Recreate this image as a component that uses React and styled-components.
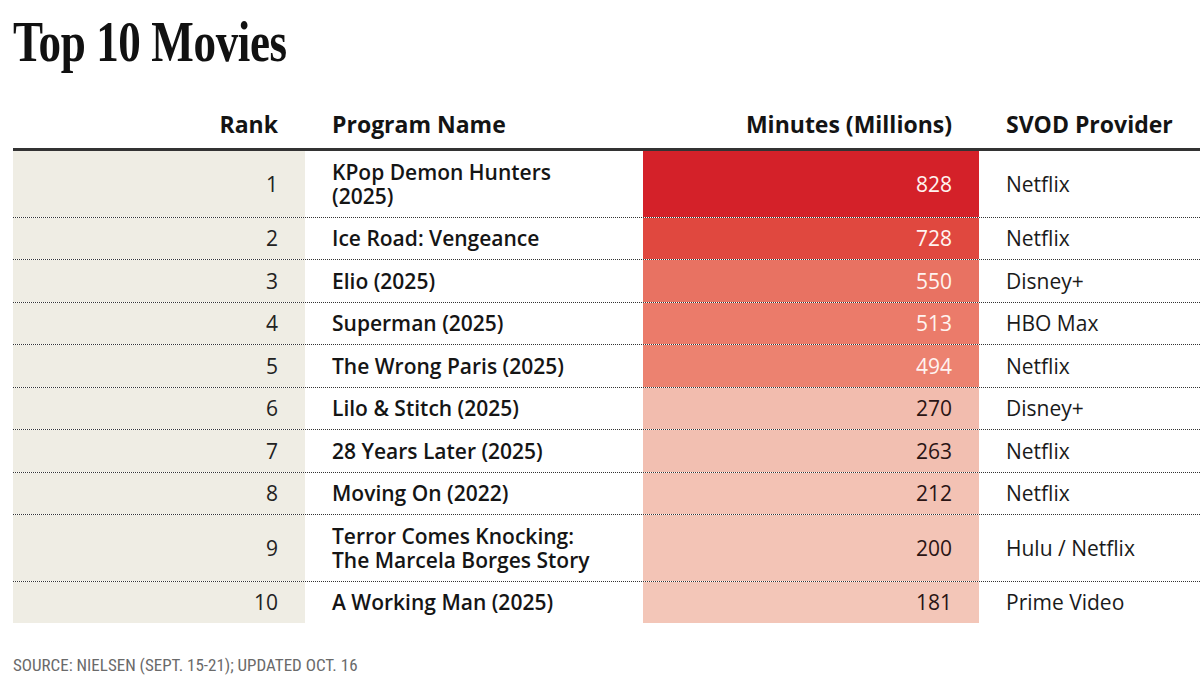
import React from "react";
import styled, { createGlobalStyle } from "styled-components";

const GlobalStyle = createGlobalStyle`
  html, body {
    margin: 0;
    padding: 0;
    background: #ffffff;
  }
  body {
    font-family: "Open Sans", "Liberation Sans", sans-serif;
    color: #1c1c1c;
  }
`;

const Page = styled.div`
  width: 1200px;
  height: 682px;
  overflow: hidden;
  padding: 0 0 0 13px;
  box-sizing: border-box;
  display: flex;
  flex-direction: column;
`;

const Title = styled.h1`
  margin: 14px 0 0;
  font-family: "Liberation Serif", "Times New Roman", serif;
  font-weight: 700;
  font-size: 56px;
  line-height: 56px;
  letter-spacing: -0.5px;
  color: #111;
  > span {
    display: inline-block;
    transform: scaleX(0.805);
    transform-origin: left center;
  }
`;

const COLUMNS = "292px 338px 336px 221px";

const HeaderRow = styled.div`
  display: grid;
  grid-template-columns: ${COLUMNS};
  margin-top: 41px;
  padding-bottom: 10px;
  border-bottom: 3px solid #333;
`;

const HeaderCell = styled.div`
  font-size: 23px;
  line-height: 27px;
  font-weight: 700;
  color: #141414;
  text-align: ${(p) => (p.$right ? "right" : "left")};
  padding: ${(p) => (p.$right ? "0 27px 0 0" : "0 0 0 27px")};
`;

const Row = styled.div`
  display: grid;
  grid-template-columns: ${COLUMNS};
  border-bottom: 1px dotted #333;
  &:last-child {
    border-bottom: none;
  }
`;

const Cell = styled.div`
  display: flex;
  align-items: center;
  padding: 8.75px 27px;
  font-size: 21px;
  line-height: 24px;
`;

const RankCell = styled(Cell)`
  justify-content: flex-end;
  background: #efede4;
  color: #222;
`;

const NameCell = styled(Cell)`
  font-weight: 600;
  color: #151515;
  white-space: nowrap;
`;

const MinutesCell = styled(Cell)`
  justify-content: flex-end;
  font-weight: 500;
  background: ${(p) => p.$tone};
  color: ${(p) => (p.$light ? "#fff4f0" : "#2a1414")};
`;

const ProviderCell = styled(Cell)`
  color: #1a1a1a;
`;

const Source = styled.div`
  margin-top: 32px;
  font-family: "Liberation Sans Narrow", "Roboto Condensed", Roboto, sans-serif;
  font-size: 17px;
  color: #6a6a6a;
`;

const movies = [
  { rank: 1, name: ["KPop Demon Hunters", "(2025)"], minutes: 828, provider: "Netflix", tone: "#d42129", light: true },
  { rank: 2, name: ["Ice Road: Vengeance"], minutes: 728, provider: "Netflix", tone: "#e0483f", light: true },
  { rank: 3, name: ["Elio (2025)"], minutes: 550, provider: "Disney+", tone: "#e87262", light: true },
  { rank: 4, name: ["Superman (2025)"], minutes: 513, provider: "HBO Max", tone: "#eb7b6a", light: true },
  { rank: 5, name: ["The Wrong Paris (2025)"], minutes: 494, provider: "Netflix", tone: "#ec8270", light: true },
  { rank: 6, name: ["Lilo & Stitch (2025)"], minutes: 270, provider: "Disney+", tone: "#f2bcae" },
  { rank: 7, name: ["28 Years Later (2025)"], minutes: 263, provider: "Netflix", tone: "#f2bfb1" },
  { rank: 8, name: ["Moving On (2022)"], minutes: 212, provider: "Netflix", tone: "#f3c2b4" },
  { rank: 9, name: ["Terror Comes Knocking:", "The Marcela Borges Story"], minutes: 200, provider: "Hulu / Netflix", tone: "#f3c4b6" },
  { rank: 10, name: ["A Working Man (2025)"], minutes: 181, provider: "Prime Video", tone: "#f3c6b8" },
];

const App = () => {
  return (
    <>
      <GlobalStyle />
      <Page>
        <Title>
          <span>Top 10 Movies</span>
        </Title>

        <HeaderRow>
          <HeaderCell $right>Rank</HeaderCell>
          <HeaderCell>Program Name</HeaderCell>
          <HeaderCell $right>Minutes (Millions)</HeaderCell>
          <HeaderCell>SVOD Provider</HeaderCell>
        </HeaderRow>

        <div>
          {movies.map((m) => (
            <Row key={m.rank}>
              <RankCell>{m.rank}</RankCell>
              <NameCell>
                <div>
                  {m.name.map((line) => (
                    <div key={line}>{line}</div>
                  ))}
                </div>
              </NameCell>
              <MinutesCell $tone={m.tone} $light={m.light}>
                {m.minutes}
              </MinutesCell>
              <ProviderCell>{m.provider}</ProviderCell>
            </Row>
          ))}
        </div>

        <Source>SOURCE: NIELSEN (SEPT. 15-21); UPDATED OCT. 16</Source>
      </Page>
    </>
  );
};

export default App;
